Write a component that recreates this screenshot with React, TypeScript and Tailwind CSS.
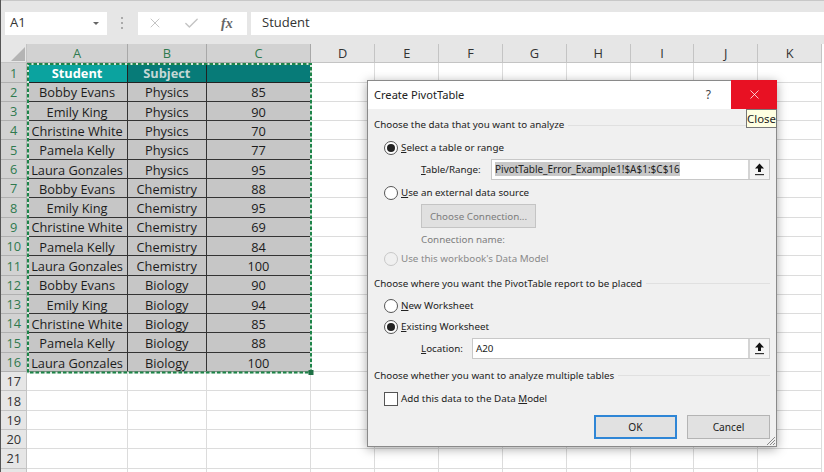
import { Check, X } from "lucide-react"

const rows = [
  ["Bobby Evans", "Physics", "85"],
  ["Emily King", "Physics", "90"],
  ["Christine White", "Physics", "70"],
  ["Pamela Kelly", "Physics", "77"],
  ["Laura Gonzales", "Physics", "95"],
  ["Bobby Evans", "Chemistry", "88"],
  ["Emily King", "Chemistry", "95"],
  ["Christine White", "Chemistry", "69"],
  ["Pamela Kelly", "Chemistry", "84"],
  ["Laura Gonzales", "Chemistry", "100"],
  ["Bobby Evans", "Biology", "90"],
  ["Emily King", "Biology", "94"],
  ["Christine White", "Biology", "85"],
  ["Pamela Kelly", "Biology", "88"],
  ["Laura Gonzales", "Biology", "100"],
]

const otherCols = ["D", "E", "F", "G", "H", "I", "J", "K"]

function ColHead({ label, active }: { label: string; active?: boolean }) {
  return (
    <div
      className={
        active
          ? "flex items-center justify-center border-r border-b border-[#a8a8a8] bg-[#d2d2d2] pt-px text-[#2f7a4f]"
          : "flex items-center justify-center border-r border-b border-[#c4c4c4] bg-[#e6e6e6] pt-px text-[#333]"
      }
    >
      {label}
    </div>
  )
}

function RowHead({ n, active }: { n?: number; active?: boolean }) {
  return (
    <div
      className={
        active
          ? "flex items-center justify-center border-r border-b border-[#b0b0b0] bg-[#d2d2d2] pt-px text-[#2f7a4f]"
          : "flex items-center justify-center border-r border-b border-[#c4c4c4] bg-[#e6e6e6] pt-px text-[#333]"
      }
    >
      {n}
    </div>
  )
}

function EmptyCells({ count }: { count: number }) {
  return (
    <>
      {Array.from({ length: count }).map((_, i) => (
        <div key={i} className="border-r border-b border-[#dcdcdc] bg-white" />
      ))}
    </>
  )
}

function Sheet() {
  return (
    <div className="grid h-[428px] auto-rows-[19.3px] grid-cols-[26.4px_100.3px_79.2px_104.2px_64.4px_repeat(7,63.8px)] overflow-hidden font-['Open_Sans',sans-serif] text-[12.8px] leading-none">
      <div className="relative border-r border-b border-[#c4c4c4] bg-[#e6e6e6]">
        <svg className="absolute right-[1px] bottom-[1px]" width="14" height="14" viewBox="0 0 14 14">
          <polygon points="14,0 14,14 0,14" fill="#b4b4b4" />
        </svg>
      </div>
      <ColHead label="A" active />
      <ColHead label="B" active />
      <ColHead label="C" active />
      {otherCols.map((c) => (
        <ColHead key={c} label={c} />
      ))}

      <RowHead n={1} active />
      <div className="flex items-center justify-center border-r border-b border-[#222] bg-[#0ba39f] pt-px font-bold text-white">Student</div>
      <div className="flex items-center justify-center border-r border-b border-[#222] bg-[#077b78] pt-px font-bold text-[#c4d8d6]">Subject</div>
      <div className="border-r border-b border-[#222] bg-[#077b78]" />
      <EmptyCells count={8} />

      {rows.map((r, i) => (
        <div key={i} className="contents">
          <RowHead n={i + 2} active />
          {r.map((v, j) => (
            <div
              key={j}
              className="flex items-center justify-center whitespace-nowrap border-r border-b border-[#333] bg-[#c6c6c6] pt-[2px] text-[#1c1c1c]"
            >
              {v}
            </div>
          ))}
          <EmptyCells count={8} />
        </div>
      ))}

      {[17, 18, 19, 20, 21, undefined].map((n, i) => (
        <div key={i} className="contents">
          <RowHead n={n} />
          <EmptyCells count={11} />
        </div>
      ))}
    </div>
  )
}

function Radio({ checked, disabled }: { checked?: boolean; disabled?: boolean }) {
  return (
    <span
      className={
        disabled
          ? "flex h-[14px] w-[14px] shrink-0 items-center justify-center rounded-full border border-[#c8c8c8] bg-[#f0f0f0]"
          : "flex h-[14px] w-[14px] shrink-0 items-center justify-center rounded-full border border-[#555] bg-white"
      }
    >
      {checked && <span className="h-[8px] w-[8px] rounded-full bg-[#222]" />}
    </span>
  )
}

function GroupLabel({ children }: { children: string }) {
  return (
    <div className="flex h-full items-center gap-1 pr-[6px]">
      <span className="whitespace-nowrap">{children}</span>
      <span className="h-px flex-1 bg-[#e0e0e0]" />
    </div>
  )
}

function RefButton() {
  return (
    <div className="flex w-[21px] shrink-0 items-center justify-center border-l-2 border-[#d4d4d4] bg-[#f4f4f4]">
      <svg width="11" height="13" viewBox="0 0 11 13">
        <path d="M5.5 0.5 L10 5.5 H7 V9 H4 V5.5 H1 Z" fill="#111" />
        <rect x="1" y="11" width="9" height="1.2" fill="#333" />
      </svg>
    </div>
  )
}

function Dialog() {
  return (
    <div className="absolute left-[366px] top-[80px] flex h-[367px] w-[410px] flex-col border border-[#8a8a8a] bg-[#f0f0f0] font-['Noto_Sans',sans-serif] text-[9.8px] leading-none text-[#222] shadow-[0_2px_10px_rgba(0,0,0,0.35)]">
      <div className="flex h-[28px] shrink-0 items-center bg-white pl-[6px]">
        <span className="flex-1 text-[11.1px]">Create PivotTable</span>
        <span className="mr-[20px] text-[12px] text-[#444]">?</span>
        <div className="relative -mt-px -mr-px flex h-[29px] w-[46px] items-center justify-center bg-[#e81123]">
          <X size={15} strokeWidth={1.2} className="text-white" />
          <div className="absolute left-[15px] top-[29px] flex h-[19px] w-[31px] items-center justify-center border border-[#777] bg-[#ffffe1] text-[11.4px] text-[#222]">
            Close
          </div>
        </div>
      </div>

      <div className="h-[27px] pt-[8px] pl-[6px]">
        <div className="h-[16px]"><GroupLabel>Choose the data that you want to analyze</GroupLabel></div>
      </div>

      <div className="flex h-[22px] items-center gap-[3px] pt-px pl-[16px]">
        <Radio checked />
        <span><u>S</u>elect a table or range</span>
      </div>
      <div className="flex h-[22px] items-center pl-[53px]">
        <span className="w-[70px] pt-px"><u>T</u>able/Range:</span>
        <div className="flex h-[21px] w-[279px] border border-[#c8c8c8] bg-white">
          <span className="flex flex-1 items-center pl-[3px]">
            <span className="bg-[#c8c8c8] py-[2px] text-[10px]">PivotTable_Error_Example1!$A$1:$C$16</span>
          </span>
          <RefButton />
        </div>
      </div>
      <div className="flex h-[24px] items-center gap-[3px] pt-px pl-[16px]">
        <Radio />
        <span><u>U</u>se an external data source</span>
      </div>
      <div className="flex h-[24px] pl-[53px]">
        <div className="flex w-[115px] items-center justify-center whitespace-nowrap border border-[#c4c4c4] bg-[#e0e0e0] pt-px text-[#7d7d7d]">Choose Connection...</div>
      </div>
      <div className="flex h-[22px] items-center pt-[1px] pl-[53px] text-[#7d7d7d]">Connection name:</div>
      <div className="flex h-[16px] items-center gap-[3px] pt-px pl-[16px] text-[#8a8a8a]">
        <Radio disabled />
        <span>Use this workbook's Data Model</span>
      </div>

      <div className="h-[28px] pt-[9px] pl-[6px]">
        <div className="h-[17px]"><GroupLabel>Choose where you want the PivotTable report to be placed</GroupLabel></div>
      </div>
      <div className="flex h-[22px] items-center gap-[3px] pt-px pl-[16px]">
        <Radio />
        <span><u>N</u>ew Worksheet</span>
      </div>
      <div className="flex h-[21px] items-center gap-[3px] pt-px pl-[16px]">
        <Radio checked />
        <span><u>E</u>xisting Worksheet</span>
      </div>
      <div className="flex h-[23px] items-center pl-[53px]">
        <span className="w-[51px] pt-px"><u>L</u>ocation:</span>
        <div className="flex h-[21px] w-[298px] border border-[#c8c8c8] bg-white">
          <span className="flex flex-1 items-center pl-[3px] pt-px">A20</span>
          <RefButton />
        </div>
      </div>

      <div className="h-[27px] pt-[7px] pl-[6px]">
        <div className="h-[17px]"><GroupLabel>Choose whether you want to analyze multiple tables</GroupLabel></div>
      </div>
      <div className="flex h-[23px] items-center gap-[3px] pt-px pl-[16px]">
        <span className="h-[14px] w-[14px] shrink-0 border border-[#555] bg-white" />
        <span>Add this data to the Data <u>M</u>odel</span>
      </div>

      <div className="relative flex flex-1 justify-end gap-[10px] pt-[5px] pr-[6px]">
        <div className="flex h-[24px] w-[83px] items-center justify-center border-2 border-[#2f86d6] bg-[#e1e1e1] text-[10.2px]">OK</div>
        <div className="flex h-[24px] w-[83px] items-center justify-center border border-[#b4b4b4] bg-[#e1e1e1] text-[10.2px]">Cancel</div>
        <svg className="absolute right-0 bottom-0" width="10" height="10" viewBox="0 0 10 10">
          <path d="M9 1 L1 9 M9 4 L4 9 M9 7 L7 9" stroke="#8a8a8a" strokeWidth="1" />
        </svg>
      </div>
    </div>
  )
}

export default function App() {
  return (
    <div className="relative h-[472px] w-[824px] overflow-hidden border-l border-[#555] bg-white">
      <div className="flex h-[44px] items-center gap-[4px] border-t border-[#c8c8c8] bg-[#e6e6e6] pt-[1px] font-['Open_Sans',sans-serif] text-[13px] text-[#333]">
        <div className="ml-[4px] flex h-[23px] w-[102px] items-center justify-between bg-white px-[5px]">
          <span>A1</span>
          <span className="mr-[3px] h-0 w-0 border-x-[3px] border-t-[3px] border-x-transparent border-t-[#666]" />
        </div>
        <div className="mx-[10px] flex w-[3px] flex-col gap-[3px]">
          <span className="h-[2px] w-[2px] bg-[#aaa]" />
          <span className="h-[2px] w-[2px] bg-[#aaa]" />
          <span className="h-[2px] w-[2px] bg-[#aaa]" />
        </div>
        <div className="flex h-[23px] w-[109px] items-center bg-white pl-[9px]">
          <X size={16} strokeWidth={1.5} className="text-[#c4c4c4]" />
          <Check size={17} strokeWidth={2} className="ml-[20px] text-[#c4c4c4]" />
          <span className="ml-[21px] font-['Liberation_Serif',serif] text-[14px] font-bold italic text-[#666]">fx</span>
        </div>
        <div className="flex h-[23px] flex-1 items-center bg-white pl-[11px]">Student</div>
      </div>

      <Sheet />

      {/* marching ants round the copied range */}
      <svg className="pointer-events-none absolute left-[24px] top-[61px]" width="290" height="316" viewBox="0 0 290 316">
        <rect x="3" y="3" width="283" height="308.5" fill="none" stroke="#d6e9dd" strokeWidth="2" />
        <rect x="3" y="3" width="283" height="308.5" fill="none" stroke="#1e8449" strokeWidth="2" strokeDasharray="3.5 2" />
        <rect x="283.5" y="309" width="5" height="5" fill="#1e7145" />
      </svg>

      <Dialog />
    </div>
  )
}
